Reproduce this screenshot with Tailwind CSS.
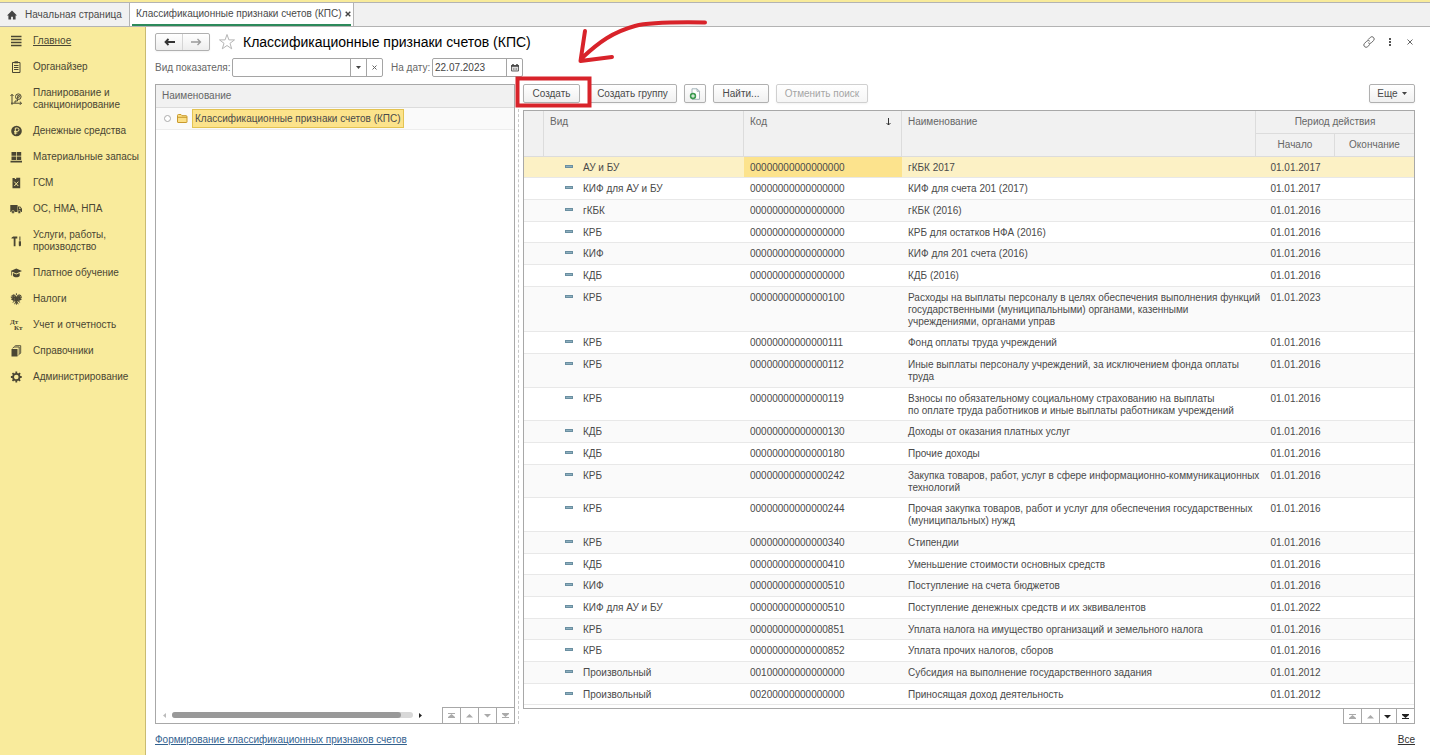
<!DOCTYPE html>
<html lang="ru">
<head>
    <meta charset="UTF-8">
    <meta name="viewport" content="width=device-width, initial-scale=1.0">
    <title>Классификационные признаки счетов (КПС)</title>
    <script src="https://cdn.jsdelivr.net/npm/@tailwindcss/browser@4"></script>
</head>
<body class="h-screen flex flex-col overflow-hidden bg-white font-['Liberation_Sans',Arial,sans-serif] text-[10px] leading-3 text-[#4a4a4a]">
    <!-- Вкладки -->
    <header class="shrink-0 border-t-2 border-[#f8eb9b]">
        <nav class="flex h-[25px] items-stretch bg-[#f1f1f1] border-y border-[#b3b3b3]" aria-label="Открытые окна">
            <a href="#" class="flex w-[130px] items-center gap-2 pl-[7px] border-r border-[#b3b3b3]">
                <svg class="size-[10px] fill-[#444]" viewBox="0 0 12 12"><path d="M6 .5 0 6.600h1.700V11.500h3.200V8h2.200v3.500h3.200V6.600H12z"/></svg>
                Начальная страница
            </a>
            <div class="flex w-[224px] items-stretch bg-white border-r border-[#b3b3b3] px-[2px]">
                <div class="flex flex-1 items-center justify-between border-b-2 border-[#2c8a5b] pl-1">
                    <a href="#" class="whitespace-nowrap">Классификационные признаки счетов (КПС)</a>
                    <button type="button" aria-label="Закрыть вкладку">
                        <svg class="size-[6px] stroke-[#444]" viewBox="0 0 6 6"><path d="M.7.7l4.600 4.600M5.300.7.7 5.300" stroke-width="1.400"/></svg>
                    </button>
                </div>
            </div>
        </nav>
    </header>

    <div class="flex flex-1 min-h-0">
        <!-- Панель разделов -->
        <aside class="w-[146px] shrink-0 bg-[#f9eb9c] border-r border-[#c9bb72] pt-px text-[#4a4633]">
            <nav aria-label="Разделы">
                <a href="#" class="flex items-center gap-[11px] py-[7px] pl-[10px]">
                    <svg class="size-3 shrink-0 stroke-[#4a4633]" viewBox="0 0 12 12"><path d="M1 1.500h10.500M1 4.500h10.500M1 7.500h10.500M1 10.500h10.500" stroke-width="1.400"/></svg>
                    <span class="underline">Главное</span>
                </a>
                <a href="#" class="flex items-center gap-[11px] py-[7px] pl-[10px]">
                    <svg class="size-3 shrink-0 fill-none stroke-[#4a4633]" viewBox="0 0 12 12"><path d="M2.500 1.500h7.500v10h-7.500z"/><path d="M4.500 1.300h3.500" stroke-width="2"/><path d="M4 4.500h4.500M4 6.500h4.500M4 8.500h4.500"/></svg>
                    Органайзер
                </a>
                <a href="#" class="flex items-center gap-[11px] py-[7px] pl-[10px]">
                    <svg class="size-3 shrink-0 fill-none stroke-[#4a4633]" viewBox="0 0 12 12"><path d="M2 11.800V1.500M.5 3 2 1.300 3.500 3M1 10.200h10.500M9.800 8.500l1.700 1.700-1.700 1.700M5 10V8h2.500V6.500"/><circle cx="8.300" cy="3.700" r="2.800"/><path d="M7.800 6V2.500h1a.8.8 0 0 1 0 1.700H7"/></svg>
                    <span>Планирование и<br>санкционирование</span>
                </a>
                <a href="#" class="flex items-center gap-[11px] py-[7px] pl-[10px]">
                    <svg class="size-3 shrink-0" viewBox="0 0 12 12"><circle cx="6.500" cy="6" r="5.300" fill="#4a4633"/><path d="M5.300 9.500V3h2a1.600 1.600 0 0 1 0 3.400H4M4 8h3.300" fill="none" stroke="#f9eb9c"/></svg>
                    Денежные средства
                </a>
                <a href="#" class="flex items-center gap-[11px] py-[7px] pl-[10px]">
                    <svg class="size-3 shrink-0 fill-[#4a4633]" viewBox="0 0 12 12"><path d="M1.500 1h4.500v3.800H1.500zM6.700 1h4.500v3.800H6.700zM1.500 5.500h4.500v3.500H1.500zM6.700 5.500h4.500v3.500H6.700zM.5 9.800h11.500v1.700H.5z"/></svg>
                    Материальные запасы
                </a>
                <a href="#" class="flex items-center gap-[11px] py-[7px] pl-[10px]">
                    <svg class="size-3 shrink-0" viewBox="0 0 12 12"><path d="M2.500 3V1h2.300v1h1.400V.7h4V11.300H2.500z" fill="#4a4633"/><path d="M4.300 4.700l4 4.300M8.300 4.700l-4 4.300" stroke="#f9eb9c"/></svg>
                    ГСМ
                </a>
                <a href="#" class="flex items-center gap-[11px] py-[7px] pl-[10px]">
                    <svg class="size-3 shrink-0" viewBox="0 0 12 12"><path d="M.3 2h7.300v7H.3zM8 3.500h2.300L12 5.800V9H8z" fill="#4a4633"/><path d="M9 4.500h1l.9 1.300H9z" fill="#f9eb9c"/><circle cx="3" cy="9" r="1.500" fill="#4a4633" stroke="#f9eb9c" stroke-width=".5"/><circle cx="9.300" cy="9" r="1.500" fill="#4a4633" stroke="#f9eb9c" stroke-width=".5"/></svg>
                    ОС, НМА, НПА
                </a>
                <a href="#" class="flex items-center gap-[11px] py-[7px] pl-[10px]">
                    <svg class="size-3 shrink-0 fill-[#4a4633]" viewBox="0 0 12 12"><path d="M1.300 3.500C1.800 2 2.800 1.500 4.300 1.500h3v2H5.500v7.700H3.700V3.500zM9.400 1.500h1v4.300h-1zM8.800 6.300H11v4.200l-1.100.9-1.100-.9z"/></svg>
                    <span>Услуги, работы,<br>производство</span>
                </a>
                <a href="#" class="flex items-center gap-[11px] py-[7px] pl-[10px]">
                    <svg class="size-3 shrink-0 fill-[#4a4633]" viewBox="0 0 12 12"><path d="M6.300 1.500 12 4 6.300 6.500.6 4zM3 5.900l3.300 1.500 3.400-1.500v3C8.500 10.600 4.200 10.600 3 8.900zM1.300 4.600h.8v4h-.8z"/></svg>
                    Платное обучение
                </a>
                <a href="#" class="flex items-center gap-[11px] py-[7px] pl-[10px]">
                    <svg class="size-3 shrink-0 fill-none stroke-[#4a4633]" viewBox="0 0 12 12"><path d="M5.600 4 5 2.200H3.900M7.200 4l.6-1.800h1.100M6.400.3v1.800" stroke-width="1"/><path d="M5 3.500h2.800l.6 4-2 2-2-2z" fill="#4a4633" stroke="none"/><path d="M4.800 5.200 3.300 1.500M4.500 6.200 1.900 2M4.500 7 .9 3.600M4.600 7.800 1.300 6M8 5.200l1.500-3.700M8.300 6.200 10.900 2M8.300 7l3.600-3.400M8.200 7.800l3.300-1.800" stroke-width="1.100"/><path d="M6.400 8v3.700M5.900 8.500l-1.300 2.700M6.900 8.500l1.300 2.700M4.700 8l-2 1.400M8.100 8l2 1.400"/></svg>
                    Налоги
                </a>
                <a href="#" class="flex items-center gap-[11px] py-[7px] pl-[10px]">
                    <svg class="size-3 shrink-0 overflow-visible fill-[#4a4633] font-['Liberation_Serif',serif] font-bold" viewBox="0 0 12 12" aria-hidden="true"><text x="0" y="5" font-size="7">Дт</text><text x="4" y="11" font-size="7">Кт</text></svg>
                    Учет и отчетность
                </a>
                <a href="#" class="flex items-center gap-[11px] py-[7px] pl-[10px]">
                    <svg class="size-3 shrink-0 fill-[#4a4633]" viewBox="0 0 12 12"><path d="M1.500 4h6v7.500h-6z"/><path d="M2.500 3.300 4 2h5.200v7.300L8 10.500M4.500 1.300 5.500.7h5.200V8L9.700 9" fill="none" stroke="#4a4633" stroke-width=".9"/></svg>
                    Справочники
                </a>
                <a href="#" class="flex items-center gap-[11px] py-[7px] pl-[10px]">
                    <svg class="size-3 shrink-0 fill-none stroke-[#4a4633]" viewBox="0 0 12 12"><circle cx="6.300" cy="6" r="3.200" stroke-width="1.800"/><path d="M6.300.6v2M6.300 9.400v2M.9 6h2M9.700 6h2M2.500 2.200l1.400 1.400M8.700 8.400l1.400 1.400M2.500 9.800l1.400-1.400M8.700 3.600l1.400-1.400" stroke-width="1.800"/></svg>
                    Администрирование
                </a>
            </nav>
        </aside>

        <main class="flex flex-1 min-w-0 flex-col pl-[9px] pr-[15px]">
            <!-- Заголовок формы -->
            <div class="flex h-[30px] shrink-0 items-center">
                <div class="flex h-[18px] w-[55px] rounded-xs border border-[#b0b0b0] bg-linear-to-b from-white to-[#ededed] shadow-xs">
                    <button type="button" class="flex flex-1 items-center justify-center border-r border-[#d5d5d5]" aria-label="Назад">
                        <svg class="h-2 w-[11px] fill-none stroke-[#333]" viewBox="0 0 11 8"><path d="M11 4H1.500M4.500 1l-3 3 3 3" stroke-width="1.800"/></svg>
                    </button>
                    <button type="button" class="flex flex-1 items-center justify-center" aria-label="Вперед">
                        <svg class="h-2 w-[11px] fill-none stroke-[#999]" viewBox="0 0 11 8"><path d="M0 4h9.500M6.500 1l3 3-3 3" stroke-width="1.300"/></svg>
                    </button>
                </div>
                <button type="button" class="ml-2" aria-label="В избранное">
                    <svg class="size-[18px] fill-none stroke-[#b5b5b5]" viewBox="0 0 18 18"><path d="M9 1.500l1.900 5.400h5.600L12 10.300l1.700 5.500L9 12.500l-4.700 3.300L6 10.300 1.500 6.900h5.600z"/></svg>
                </button>
                <h1 class="ml-[7px] text-[14px] leading-4 text-black">Классификационные признаки счетов (КПС)</h1>
                <div class="ml-auto flex items-center gap-[13px]">
                    <button type="button" aria-label="Получить ссылку">
                        <svg class="size-3 fill-none stroke-[#666]" viewBox="0 0 12 12"><path d="M5 3.700 7.300 1.400a2.200 2.200 0 0 1 3.200 3.200L8.300 6.800a2.200 2.200 0 0 1-3.100 0M7 8.300l-2.300 2.300a2.200 2.200 0 0 1-3.200-3.200l2.200-2.200a2.200 2.200 0 0 1 3.100 0"/></svg>
                    </button>
                    <button type="button" aria-label="Дополнительно">
                        <svg class="h-[10px] w-1 fill-[#555]" viewBox="0 0 4 10"><path d="M1 1h2v2H1zM1 4h2v2H1zM1 7h2v2H1z"/></svg>
                    </button>
                    <button type="button" class="mx-[2px]" aria-label="Закрыть">
                        <svg class="size-[6px] stroke-[#666]" viewBox="0 0 6 6"><path d="M.5.5l5 5M5.500.5l-5 5"/></svg>
                    </button>
                </div>
            </div>

            <!-- Отборы -->
            <div class="flex h-[19px] mt-px shrink-0 items-center text-[#666]">
                <label for="kind" class="w-[77px] whitespace-nowrap">Вид показателя:</label>
                <div class="flex h-[19px] w-[151px] rounded-xs border border-[#a5a5a5]">
                    <input id="kind" type="text" class="min-w-0 flex-1 px-1 outline-none">
                    <button type="button" class="flex w-4 items-center justify-center border-l border-[#a5a5a5]" aria-label="Выбрать">
                        <svg class="h-[3px] w-[5px] fill-[#444]" viewBox="0 0 5 3"><path d="M0 0h5L2.500 3z"/></svg>
                    </button>
                    <button type="button" class="flex w-4 items-center justify-center border-l border-[#a5a5a5]" aria-label="Очистить">
                        <svg class="size-[5px] stroke-[#666]" viewBox="0 0 5 5"><path d="M.5.5l4 4M4.500.5l-4 4"/></svg>
                    </button>
                </div>
                <label for="date" class="ml-2 w-[41px] whitespace-nowrap">На дату:</label>
                <div class="flex h-[19px] w-[91px] rounded-xs border border-[#a5a5a5]">
                    <input id="date" type="text" value="22.07.2023" class="min-w-0 flex-1 px-[2px] text-[#444] outline-none">
                    <button type="button" class="flex w-4 items-center justify-center border-l border-[#a5a5a5]" aria-label="Календарь">
                        <svg class="size-2" viewBox="0 0 8 8"><path d="M.5 1.500h7v5.500h-7z" fill="#ddd" stroke="#666"/><path d="M0 2h8M2 0v2M6 0v2" stroke="#444" stroke-width="1.500"/><path d="M2 5h4" stroke="#666" stroke-dasharray="1 .5"/></svg>
                    </button>
                </div>
            </div>

            <div class="mt-[7px] flex flex-1 min-h-0">
                <!-- Дерево групп -->
                <section class="flex w-[360px] shrink-0 flex-col border border-[#a8a8a8]">
                    <div class="flex h-[23px] shrink-0 items-center border-b border-[#dcdcdc] bg-[#f1f1f1] px-[6px] text-[#666]">Наименование</div>
                    <div class="flex h-[22px] shrink-0 items-center border-b border-[#ededed] bg-[#fafafa] pl-2">
                        <svg class="size-[7px] fill-white stroke-[#aaa]" viewBox="0 0 7 7"><circle cx="3.500" cy="3.500" r="3"/></svg>
                        <svg class="ml-[6px] h-[9px] w-[11px] fill-[#fbdf86] stroke-[#c99a2e]" viewBox="0 0 11 9"><path d="M.5 8V1.500q0-1 1-1h2.500l1 1.200h4q1 0 1 1V8q0 .5-.5.5H1Q.5 8.500.5 8zM.5 3.300h9.500"/></svg>
                        <span class="ml-1 flex h-[19px] items-center whitespace-nowrap border border-[#e3c352] bg-[#fce38b] px-[2px]">Классификационные признаки счетов (КПС)</span>
                    </div>
                    <div class="flex-1"></div>
                    <div class="flex h-4 shrink-0 items-stretch">
                        <div class="flex flex-1 items-center gap-[6px] pl-[7px] pr-5">
                            <svg class="h-[5px] w-[3px] fill-[#bbb]" viewBox="0 0 3 5"><path d="M3 0v5L0 2.500z"/></svg>
                            <div class="h-[6px] flex-1 rounded-full bg-[#d8d8d8]"><div class="h-full w-[95%] rounded-full bg-[#999]"></div></div>
                            <svg class="h-[5px] w-[3px] fill-[#222]" viewBox="0 0 3 5"><path d="M0 0v5l3-2.500z"/></svg>
                        </div>
                        <div class="flex w-[72px] divide-x divide-[#a8a8a8] border-l border-t border-[#a8a8a8] fill-[#aaa]">
                            <button type="button" class="flex flex-1 items-center justify-center" aria-label="В начало"><svg class="size-[7px]" viewBox="0 0 7 7"><path d="M0 1h7v1H0zM3.500 2 7 5H0zM0 5h7v1H0z"/></svg></button>
                            <button type="button" class="flex flex-1 items-center justify-center" aria-label="Вверх"><svg class="size-[7px]" viewBox="0 0 7 7"><path d="M3.500 2 7 5.500H0z"/></svg></button>
                            <button type="button" class="flex flex-1 items-center justify-center" aria-label="Вниз"><svg class="size-[7px]" viewBox="0 0 7 7"><path d="M0 2h7L3.500 5.500z"/></svg></button>
                            <button type="button" class="flex flex-1 items-center justify-center" aria-label="В конец"><svg class="size-[7px]" viewBox="0 0 7 7"><path d="M0 1h7v1H0zM0 2h7L3.500 5zM0 5h7v1H0z"/></svg></button>
                        </div>
                    </div>
                </section>

                <!-- Разделитель -->
                <div class="w-1 shrink-0 border-r border-dashed border-[#c8c8c8]"></div>

                <!-- Список КПС -->
                <section class="ml-1 flex flex-1 min-w-0 flex-col">
                    <div class="flex h-[26px] shrink-0 items-start text-[#4a4a4a]">
                        <div class="relative">
                            <button type="button" class="h-[19px] w-[57px] rounded-xs border border-[#b0b0b0] bg-linear-to-b from-white to-[#f0f0f0] shadow-xs">Создать</button>
                            <svg class="pointer-events-none absolute -left-2 -top-[68px] z-10 h-[96px] w-[196px] max-w-none fill-none stroke-[#d8232a]" viewBox="0 0 196 96"><path d="M2.500 62.500h72v27h-72z" stroke-width="4"/><path d="M190 6.500C160 6 135 6 120 10 98 16 84 26 67 42M70 15l-4.500 30L97 41" stroke-width="4" stroke-linecap="round" stroke-linejoin="round"/></svg>
                        </div>
                        <button type="button" class="ml-2 h-[19px] w-[89px] rounded-xs border border-[#b0b0b0] bg-linear-to-b from-white to-[#f0f0f0] shadow-xs">Создать группу</button>
                        <button type="button" class="ml-[7px] flex h-[19px] w-[22px] items-center justify-center rounded-xs border border-[#b0b0b0] bg-linear-to-b from-white to-[#f0f0f0] shadow-xs" aria-label="Создать копированием">
                            <svg class="size-3" viewBox="0 0 12 12"><path d="M3 .8h5l2.500 2.500v8H3z" fill="#fff" stroke="#8fa3ab" stroke-width=".8"/><path d="M8 .8v2.500h2.500" fill="none" stroke="#8fa3ab" stroke-width=".8"/><circle cx="4" cy="8" r="3.200" fill="#3b9a50"/><path d="M2.200 8h3.600M4 6.200v3.600" stroke="#fff"/></svg>
                        </button>
                        <button type="button" class="ml-[7px] h-[19px] w-14 rounded-xs border border-[#b0b0b0] bg-linear-to-b from-white to-[#f0f0f0] shadow-xs">Найти...</button>
                        <button type="button" disabled class="ml-[7px] h-[19px] w-[92px] rounded-xs border border-[#d0d0d0] bg-linear-to-b from-white to-[#f5f5f5] text-[#a5a5a5] shadow-xs">Отменить поиск</button>
                        <button type="button" class="ml-auto flex h-[19px] w-[46px] items-center justify-center gap-1 rounded-xs border border-[#b0b0b0] bg-linear-to-b from-white to-[#f0f0f0] shadow-xs">
                            Еще
                            <svg class="h-[3px] w-[5px] fill-[#444]" viewBox="0 0 5 3"><path d="M0 0h5L2.500 3z"/></svg>
                        </button>
                    </div>

                    <div class="flex-1 min-h-0 overflow-hidden border border-[#a8a8a8]">
                        <table class="w-full table-fixed border-separate border-spacing-0">
                            <colgroup>
                                <col class="w-5">
                                <col class="w-[200px]">
                                <col class="w-[158px]">
                                <col>
                                <col class="w-[79px]">
                                <col class="w-[79px]">
                            </colgroup>
                            <thead class="bg-[#f1f1f1] text-left align-top text-[#666]">
                                <tr class="h-[23px]">
                                    <th rowspan="2" class="border-b border-r border-[#dcdcdc]"></th>
                                    <th rowspan="2" class="border-b border-r border-[#dcdcdc] px-[6px] pt-[5px] font-normal">Вид</th>
                                    <th rowspan="2" class="border-b border-r border-[#dcdcdc] px-[6px] pt-[5px] font-normal" aria-sort="ascending">
                                        <div class="flex items-center justify-between pr-1">
                                            Код
                                            <svg class="h-2 w-[5px] fill-none stroke-[#333]" viewBox="0 0 5 8"><path d="M2.500 0v7M.5 5l2 2 2-2"/></svg>
                                        </div>
                                    </th>
                                    <th rowspan="2" class="border-b border-r border-[#dcdcdc] px-[6px] pt-[5px] font-normal">Наименование</th>
                                    <th colspan="2" class="border-b border-[#dcdcdc] pt-[5px] text-center font-normal">Период действия</th>
                                </tr>
                                <tr class="h-[23px]">
                                    <th class="border-b border-r border-[#dcdcdc] pt-[5px] text-center font-normal">Начало</th>
                                    <th class="border-b border-[#dcdcdc] pt-[5px] text-center font-normal">Окончание</th>
                                </tr>
                            </thead>
                            <tbody id="rows"></tbody>
                        </table>
                    </div>
                    <div class="flex h-[15px] w-[72px] shrink-0 self-end divide-x divide-[#a8a8a8] border-x border-b border-[#a8a8a8]">
                        <button type="button" class="flex flex-1 items-center justify-center fill-[#aaa]" aria-label="В начало"><svg class="size-[7px]" viewBox="0 0 7 7"><path d="M0 1h7v1H0zM3.500 2 7 5H0zM0 5h7v1H0z"/></svg></button>
                        <button type="button" class="flex flex-1 items-center justify-center fill-[#aaa]" aria-label="Вверх"><svg class="size-[7px]" viewBox="0 0 7 7"><path d="M3.500 2 7 5.500H0z"/></svg></button>
                        <button type="button" class="flex flex-1 items-center justify-center fill-[#222]" aria-label="Вниз"><svg class="size-[7px]" viewBox="0 0 7 7"><path d="M0 2h7L3.500 5.500z"/></svg></button>
                        <button type="button" class="flex flex-1 items-center justify-center fill-[#222]" aria-label="В конец"><svg class="size-[7px]" viewBox="0 0 7 7"><path d="M0 1h7v1H0zM0 2h7L3.500 5zM0 5h7v1H0z"/></svg></button>
                    </div>
                </section>
            </div>

            <footer class="flex h-[31px] shrink-0 items-center justify-between">
                <a href="#" class="text-[#33628f] underline">Формирование классификационных признаков счетов</a>
                <a href="#" class="text-[#333] underline">Все</a>
            </footer>
        </main>
    </div>

    <script>
        // Вид, код, наименование, начало действия
        const kps = [
            ['АУ и БУ', '00000000000000000', 'гКБК 2017', '01.01.2017'],
            ['КИФ для АУ и БУ', '00000000000000000', 'КИФ для счета 201 (2017)', '01.01.2017'],
            ['гКБК', '00000000000000000', 'гКБК (2016)', '01.01.2016'],
            ['КРБ', '00000000000000000', 'КРБ для остатков НФА (2016)', '01.01.2016'],
            ['КИФ', '00000000000000000', 'КИФ для 201 счета (2016)', '01.01.2016'],
            ['КДБ', '00000000000000000', 'КДБ (2016)', '01.01.2016'],
            ['КРБ', '00000000000000100', 'Расходы на выплаты персоналу в целях обеспечения выполнения функций<br>государственными (муниципальными) органами, казенными<br>учреждениями, органами управ', '01.01.2023'],
            ['КРБ', '00000000000000111', 'Фонд оплаты труда учреждений', '01.01.2016'],
            ['КРБ', '00000000000000112', 'Иные выплаты персоналу учреждений, за исключением фонда оплаты<br>труда', '01.01.2016'],
            ['КРБ', '00000000000000119', 'Взносы по обязательному социальному страхованию на выплаты<br>по оплате труда работников и иные выплаты работникам учреждений', '01.01.2016'],
            ['КДБ', '00000000000000130', 'Доходы от оказания платных услуг', '01.01.2016'],
            ['КДБ', '00000000000000180', 'Прочие доходы', '01.01.2016'],
            ['КРБ', '00000000000000242', 'Закупка товаров, работ, услуг в сфере информационно-коммуникационных<br>технологий', '01.01.2016'],
            ['КРБ', '00000000000000244', 'Прочая закупка товаров, работ и услуг для обеспечения государственных<br>(муниципальных) нужд', '01.01.2016'],
            ['КРБ', '00000000000000340', 'Стипендии', '01.01.2016'],
            ['КДБ', '00000000000000410', 'Уменьшение стоимости основных средств', '01.01.2016'],
            ['КИФ', '00000000000000510', 'Поступление на счета бюджетов', '01.01.2016'],
            ['КИФ для АУ и БУ', '00000000000000510', 'Поступление денежных средств и их эквивалентов', '01.01.2022'],
            ['КРБ', '00000000000000851', 'Уплата налога на имущество организаций и земельного налога', '01.01.2016'],
            ['КРБ', '00000000000000852', 'Уплата прочих налогов, сборов', '01.01.2016'],
            ['Произвольный', '00100000000000000', 'Субсидия на выполнение государственного задания', '01.01.2012'],
            ['Произвольный', '00200000000000000', 'Приносящая доход деятельность', '01.01.2012']
        ];

        const cell = 'border-b border-[#e8e8e8] pt-[5px] pb-1 group-nth-[3n+1]:pb-[3px]';

        document.getElementById('rows').innerHTML = kps.map(([kind, code, name, start], i) => {
            const row = i === 0 ? 'bg-[#fcf1c5]' : i % 2 ? 'bg-white' : 'bg-[#fafafa]';
            const current = i === 0 ? 'bg-[#fce38d]' : '';
            return `<tr class="group align-top ${row}">
                <td class="${cell}"></td>
                <td class="${cell} pl-[21px]">
                    <div class="flex items-start gap-[10px]">
                        <span class="mt-[3px] h-[3px] w-2 border border-[#6a8fa1] bg-[#8fb0bf]"></span>${kind}
                    </div>
                </td>
                <td class="${cell} px-[6px] ${current}">${code}</td>
                <td class="${cell} px-[6px] whitespace-nowrap">${name}</td>
                <td class="${cell} text-center">${start}</td>
                <td class="${cell}"></td>
            </tr>`;
        }).join('');
    </script>
</body>
</html>
